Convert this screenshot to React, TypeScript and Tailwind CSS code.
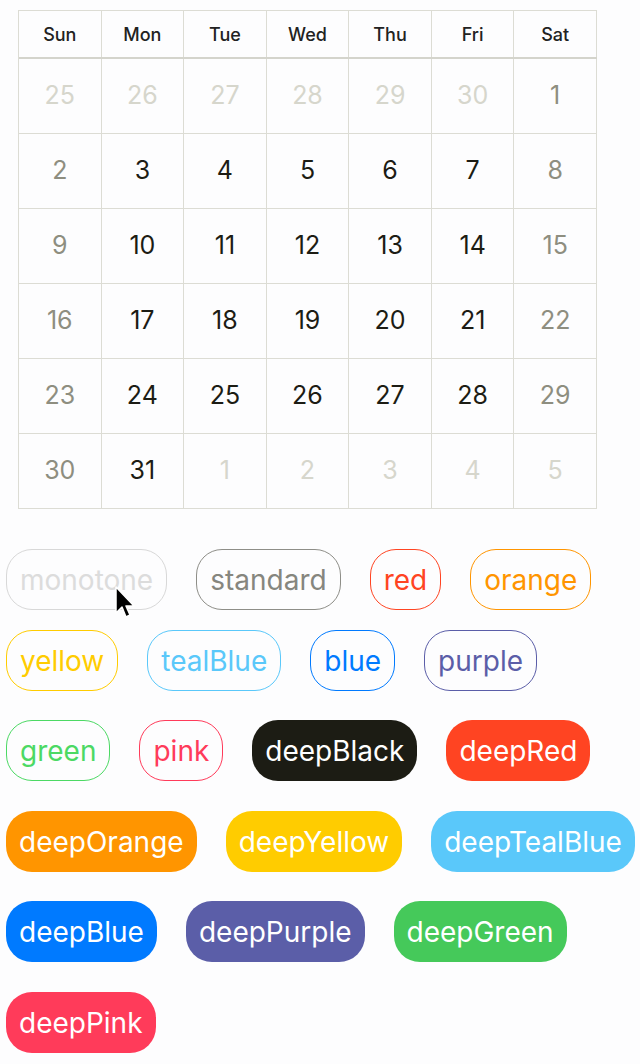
import React from "react";

type Day = { n: number; kind: "other" | "weekend" | "day" };

const weeks: Day[][] = (() => {
  const rows: Day[][] = [];
  const prev = [25, 26, 27, 28, 29, 30];
  const all: { n: number; other: boolean }[] = [];
  prev.forEach((n) => all.push({ n, other: true }));
  for (let i = 1; i <= 31; i++) all.push({ n: i, other: false });
  let k = 1;
  while (all.length < 42) all.push({ n: k++, other: true });
  for (let r = 0; r < 6; r++) {
    rows.push(
      all.slice(r * 7, r * 7 + 7).map((d, c) => ({
        n: d.n,
        kind: d.other ? "other" : c === 0 || c === 6 ? "weekend" : "day",
      }))
    );
  }
  return rows;
})();

const heads = ["Sun", "Mon", "Tue", "Wed", "Thu", "Fri", "Sat"];

type Btn = { label: string; cls: string };

const rows: { mt: string; items: Btn[] }[] = [
  {
    mt: "mt-[40px]",
    items: [
      { label: "monotone", cls: "border border-[#d8d8d8] text-[#dcdcdc]" },
      { label: "standard", cls: "border border-[#8e8e88] text-[#86867e]" },
      { label: "red", cls: "border border-[#ff4422] text-[#ff4422]" },
      { label: "orange", cls: "border border-[#ff9500] text-[#ff9500]" },
    ],
  },
  {
    mt: "mt-[20px]",
    items: [
      { label: "yellow", cls: "border border-[#ffcc00] text-[#ffcc00]" },
      { label: "tealBlue", cls: "border border-[#5ac8fa] text-[#5ac8fa]" },
      { label: "blue", cls: "border border-[#007aff] text-[#007aff]" },
      { label: "purple", cls: "border border-[#5b5ea8] text-[#5b5ea8]" },
    ],
  },
  {
    mt: "mt-[29px]",
    items: [
      { label: "green", cls: "border border-[#4cd964] text-[#4cd964]" },
      { label: "pink", cls: "border border-[#ff3b5a] text-[#ff3b5a]" },
      { label: "deepBlack", cls: "bg-[#1c1c14] text-white" },
      { label: "deepRed", cls: "bg-[#ff4422] text-white" },
    ],
  },
  {
    mt: "mt-[30px]",
    items: [
      { label: "deepOrange", cls: "bg-[#ff9500] text-white" },
      { label: "deepYellow", cls: "bg-[#ffcc00] text-white" },
      { label: "deepTealBlue", cls: "bg-[#5ac8fa] text-white" },
    ],
  },
  {
    mt: "mt-[29px]",
    items: [
      { label: "deepBlue", cls: "bg-[#007aff] text-white" },
      { label: "deepPurple", cls: "bg-[#5b5ea8] text-white" },
      { label: "deepGreen", cls: "bg-[#45c95a] text-white" },
    ],
  },
  {
    mt: "mt-[30px]",
    items: [{ label: "deepPink", cls: "bg-[#ff3b5a] text-white" }],
  },
];

export default function App() {
  return (
    <div
      className="relative w-[640px] h-[1064px] overflow-hidden bg-[#fdfdfe]"
      style={{ fontFamily: "Inter, 'Noto Sans', sans-serif" }}
    >
      <div className="ml-[18px] mt-[10px] w-[579px] border-l border-t border-[#dcdcd4]">
        <div className="grid grid-cols-7 h-[48px] border-b-2 border-[#d4d4cc]">
          {heads.map((h) => (
            <div
              key={h}
              className="flex items-center justify-center border-r border-[#dcdcd4] text-[18px] font-medium text-[#222]"
            >
              {h}
            </div>
          ))}
        </div>
        {weeks.map((w, i) => (
          <div key={i} className="grid grid-cols-7 h-[75px] border-b border-[#dcdcd4]">
            {w.map((d, j) => (
              <div
                key={j}
                className={
                  "flex items-center justify-center border-r border-[#dcdcd4] text-[25px] " +
                  (d.kind === "other"
                    ? "text-[#d6d6cc]"
                    : d.kind === "weekend"
                    ? "text-[#8e8e80]"
                    : "text-[#1c1c14]")
                }
              >
                {d.n}
              </div>
            ))}
          </div>
        ))}
      </div>

      <div className="pl-[6px]">
        {rows.map((r, i) => (
          <div key={i} className={"flex gap-[29px] " + r.mt}>
            {r.items.map((b) => (
              <div
                key={b.label}
                className={
                  "h-[61px] px-[13px] rounded-[26px] flex items-center justify-center text-[28px] whitespace-nowrap " +
                  b.cls
                }
              >
                {b.label}
              </div>
            ))}
          </div>
        ))}
      </div>

      <svg
        className="absolute left-[114px] top-[586px]"
        width="24"
        height="34"
        viewBox="0 0 24 34"
      >
        <path
          d="M2 1 L2 27 L8 21 L12 31 L16 29 L12 20 L20 20 Z"
          fill="#000"
          stroke="#fff"
          strokeWidth="1.5"
          strokeLinejoin="round"
        />
      </svg>
    </div>
  );
}
